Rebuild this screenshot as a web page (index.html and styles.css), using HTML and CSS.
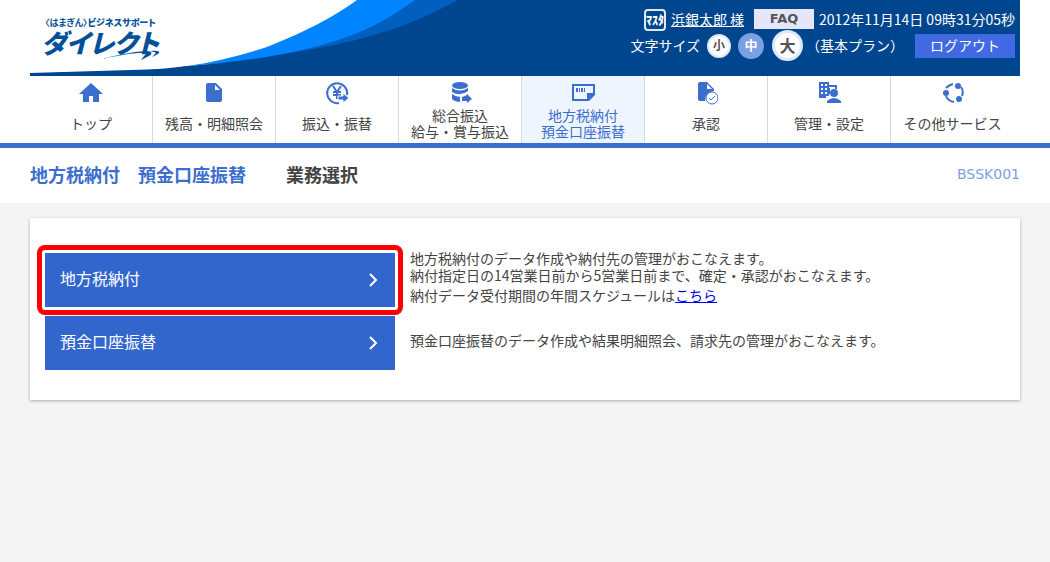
FILE: index.html
```html
<!DOCTYPE html>
<html lang="ja">
<head>
<meta charset="utf-8">
<meta name="viewport" content="width=device-width, initial-scale=1">
<title>業務選択</title>
<link rel="stylesheet" href="styles.css">
</head>
<body>
<div class="top">
  <header class="header">
    <svg class="wave" viewBox="0 0 440 76" aria-hidden="true">
      <path fill="#fff" d="M0 0H440V60L0 73Z"/>
      <path fill="#0084ff" d="M327 0C314 9 294 24 237 47C212 55 185 62 157 66L237 60L440 20V0Z"/>
      <path fill="#005fbf" d="M385 0C350 25 318 43 237 57L260 60L440 20V0Z"/>
      <path fill="#00468e" d="M428 0C404 13 376 26 337 37C304 46 272 51 237 57C200 62 175 65 157 66C124 70 90 73 0 73V76H440V0Z"/>
    </svg>
    <a class="logo" href="#">
      <span class="logo-sub"><span class="logo-bank">〈はまぎん〉</span>ビジネスサポート</span>
      <span class="logo-main">ダイレクト</span>
      <svg class="logo-mark" viewBox="0 0 60 12" aria-hidden="true">
        <defs><linearGradient id="tail"><stop offset="0" stop-color="#35b5ee"/><stop offset=".7" stop-color="#00509a"/></linearGradient></defs>
        <path fill="url(#tail)" d="M0 9C15 5 30 2 46 1C51 1 52 4 48 6L42 9L40 10L43 6C47 3 43 3 37 3C24 4 12 7 0 9Z"/>
        <path fill="#00509a" d="M49 1C61 0 61 3 51 7L54 4C56 2 53 2 49 1Z"/>
      </svg>
    </a>
    <div class="tools">
      <div class="row">
        <span class="master">ﾏｽﾀ</span>
        <a class="user" href="#">浜銀太郎 様</a>
        <button class="faq" type="button">FAQ</button>
        <time class="clock">2012年11月14日 09時31分05秒</time>
      </div>
      <div class="row row-second">
        <span class="size-label">文字サイズ</span>
        <button class="size small" type="button">小</button>
        <button class="size medium" type="button">中</button>
        <button class="size large" type="button">大</button>
        <span class="plan">（基本プラン）</span>
        <button class="logout" type="button">ログアウト</button>
      </div>
    </div>
  </header>
  <nav class="nav">
    <a class="tab" href="#">
      <svg class="icon" viewBox="0 0 24 24"><path d="M12 2L24 13H20V21H14V15H10V21H4V13H0Z"/></svg>
      <span class="label">トップ</span></a>
    <a class="tab" href="#">
      <svg class="icon" viewBox="0 0 24 24"><path fill-rule="evenodd" d="M6 2H14L20 8V19Q20 21 18 21H6Q4 21 4 19V4Q4 2 6 2ZM13 4V9H18Z"/></svg>
      <span class="label">残高・明細照会</span></a>
    <a class="tab" href="#">
      <svg class="icon" viewBox="0 0 24 24"><path class="line" d="M14 22A10 10 0 1 1 22 14"/><path class="line" d="M8 5L12 11L16 5M12 11V18M8 11H16M8 14H16"/><path class="halo" d="M13 15H18V12L24 17L18 22V19H13Z"/></svg>
      <span class="label">振込・振替</span></a>
    <a class="tab" href="#">
      <svg class="icon" viewBox="0 0 24 24"><ellipse cx="12" cy="4.500" rx="8" ry="3.500"/><path d="M4 7Q12 12 20 7V10Q12 16 4 11ZM4 13Q8 16 12 16V21Q4 20 4 17ZM14 16Q18 15 20 13V14L24 18L19 22V20H14Z"/></svg>
      <span class="label">総合振込<br>給与・賞与振込</span></a>
    <a class="tab current" href="#" aria-current="page">
      <svg class="icon" viewBox="0 0 24 24"><path fill-rule="evenodd" d="M1 3H24V14L18 20H1ZM3 5V18H16V12H22V5Z"/><path d="M5 7H7V11H5ZM8 7H9V11H8ZM10 7H12V11H10ZM13 7H14V11H13Z"/></svg>
      <span class="label">地方税納付<br>預金口座振替</span></a>
    <a class="tab" href="#">
      <svg class="icon" viewBox="0 0 24 24"><path fill-rule="evenodd" d="M6 1H13L20 8V10Q11 11 11 20H6Q4 20 4 18V3Q4 1 6 1ZM13 3V8H18Z"/><circle class="thin" cx="18" cy="17" r="6"/><path class="thin" d="M15 17L17 19L21 15"/></svg>
      <span class="label">承認</span></a>
    <a class="tab" href="#">
      <svg class="icon" viewBox="0 0 24 24"><path fill-rule="evenodd" d="M2 1H12V4H20V6H12V7H13V13H12V15H9V17H2ZM4 3V5H6V3ZM8 3V5H10V3ZM4 7V9H6V7ZM8 7V9H10V7ZM4 11V13H6V11ZM8 11V13H10V11Z"/><circle cx="17" cy="12" r="4"/><path d="M10 22V20Q17 14 24 20V22ZM18 5H20V8H18Z"/></svg>
      <span class="label">管理・設定</span></a>
    <a class="tab" href="#">
      <svg class="icon" viewBox="0 0 24 24"><path class="line" d="M5 7Q8 4 12 3M5 15Q7 20 13 21M20 6Q23 10 21 15"/><circle cx="5" cy="12" r="3"/><circle cx="17" cy="5" r="3"/><circle cx="18" cy="18" r="3"/></svg>
      <span class="label">その他サービス</span></a>
  </nav>
</div>
<div class="heading">
  <h1 class="title"><span class="category">地方税納付　預金口座振替</span><span>業務選択</span></h1>
  <span class="code">BSSK001</span>
</div>
<main class="card">
  <div class="item">
    <button class="choice marked" type="button"><span class="choice-text">地方税納付</span><svg class="chevron" viewBox="0 0 10 16"><path d="M2 2L8 8L2 14"/></svg></button>
    <div class="description">
      <p>地方税納付のデータ作成や納付先の管理がおこなえます。<br>納付指定日の14営業日前から5営業日前まで、確定・承認がおこなえます。</p>
      <p>納付データ受付期間の年間スケジュールは<a class="link" href="#">こちら</a></p>
    </div>
  </div>
  <div class="item">
    <button class="choice" type="button"><span class="choice-text">預金口座振替</span><svg class="chevron" viewBox="0 0 10 16"><path d="M2 2L8 8L2 14"/></svg></button>
    <div class="description"><p>預金口座振替のデータ作成や結果明細照会、請求先の管理がおこなえます。</p></div>
  </div>
</main>
</body>
</html>
```
FILE: styles.css
```css
* { box-sizing: border-box; }
body {
  margin: 0;
  background: #f4f4f4;
  color: #444;
  font: 14px/18px "Noto Sans CJK JP", sans-serif;
}
button { font: inherit; border: 0; padding: 0; cursor: pointer; }
p { margin: 0; }

.top { background: #fff; border-bottom: 5px solid #3c6ecd; }
.header {
  position: relative;
  display: flex;
  justify-content: space-between;
  min-height: 76px;
  margin: 0 30px;
  background: #00468e;
  color: #fff;
}
.wave { position: absolute; left: 0; top: 0; width: 440px; height: 76px; }
.logo {
  position: relative;
  display: flex;
  flex-direction: column;
  padding: 17px 0 0 11px;
  color: #00509a;
  text-decoration: none;
  white-space: nowrap;
}
.logo-sub { padding-left: 4px; font-size: 9px; line-height: 11px; font-weight: 900; font-feature-settings: "palt"; }
.logo-bank { font-weight: 700; }
.logo-main { font-size: 26px; line-height: 28px; font-weight: 900; font-style: italic; font-feature-settings: "palt"; }
.logo-mark { position: absolute; left: 71px; top: 50px; width: 60px; height: 12px; }

.tools { position: relative; padding: 9px 5px 0 0; white-space: nowrap; }
.row { display: flex; align-items: flex-start; justify-content: flex-end; height: 22px; line-height: 20px; }
.row-second { height: 31px; align-items: center; margin-top: -1px; line-height: 18px; }
.master {
  width: 22px;
  height: 22px;
  margin-right: 5px;
  border: 2px solid #dce8f6;
  border-radius: 4px;
  font-size: 12px;
  line-height: 18px;
  font-weight: 900;
}
.user { color: #fff; margin-right: 10px; }
.faq { width: 60px; height: 20px; margin-right: 5px; background: #e6e6fa; color: #555; font-family: "DejaVu Sans", sans-serif; font-size: 13px; font-weight: 700; line-height: 20px; }
.size-label { margin-right: 7px; padding-bottom: 2px; }
.size { border-radius: 50%; font-weight: 700; color: #555; background: #fff; border: 2px solid #dfe8fa; line-height: 18px; }
.small { width: 24px; height: 24px; margin-right: 7px; padding-bottom: 2px; font-size: 12px; }
.medium { width: 26px; height: 26px; margin-right: 8px; padding-bottom: 2px; background: #7c9fe4; border-color: #7c9fe4; color: #fff; font-size: 13px; }
.large { width: 31px; height: 31px; margin-right: 3px; padding-bottom: 2px; border-width: 3px; font-size: 16px; }
.plan { margin-right: 11px; padding-bottom: 2px; }
.logout { width: 100px; height: 24px; padding-bottom: 2px; background: #4169e1; color: #fff; }

.nav {
  display: grid;
  grid-template-columns: repeat(8, 1fr);
  margin: 0 30px;
  padding-right: 6px;
}
.tab {
  display: flex;
  flex-direction: column;
  align-items: center;
  gap: 2px;
  padding: 5px 0 4px;
  border-right: 1px solid #d8d8d8;
  color: #444;
  text-align: center;
  text-decoration: none;
}
.tab:last-child { border-right: 0; }
.current { background: #eff5ff; color: #3c6ecd; }
.icon { width: 24px; height: 24px; fill: #3c6ecd; }
.line { fill: none; stroke: #3c6ecd; stroke-width: 2; }
.thin { fill: none; stroke: #3c6ecd; stroke-width: 1; }
.halo { stroke: #fff; stroke-width: 1; }
.label { display: grid; align-items: center; min-height: 32px; line-height: 16px; }

.heading {
  display: flex;
  align-items: center;
  justify-content: space-between;
  min-height: 55px;
  padding: 0 30px 4px;
  background: #fff;
}
.title { display: flex; gap: 40px; margin: 0; font-size: 18px; line-height: 24px; font-weight: 700; }
.category { color: #3c6ecd; }
.code { color: #7c9fe4; font-family: "DejaVu Sans", sans-serif; }

.card {
  display: flex;
  flex-direction: column;
  gap: 9px;
  margin: 15px 30px;
  padding: 35px 15px 30px;
  background: #fff;
  box-shadow: 0 1px 3px rgba(0, 0, 0, .3);
}
.item { display: flex; align-items: center; gap: 15px; min-height: 54px; }
.choice {
  position: relative;
  display: flex;
  align-items: center;
  justify-content: space-between;
  flex: 0 0 350px;
  height: 54px;
  padding: 0 17px 0 15px;
  background: #3366cc;
  color: #fff;
  font-size: 16px;
}
.choice-text { padding-bottom: 4px; }
.marked::after {
  content: "";
  position: absolute;
  inset: -8px;
  border: 5px solid #f00;
  border-radius: 8px;
}
.chevron { width: 10px; height: 16px; fill: none; stroke: #fff; stroke-width: 2; }
.description { display: grid; gap: 3px; margin-top: -6px; line-height: 17px; }
.link { color: #00e; }
```
